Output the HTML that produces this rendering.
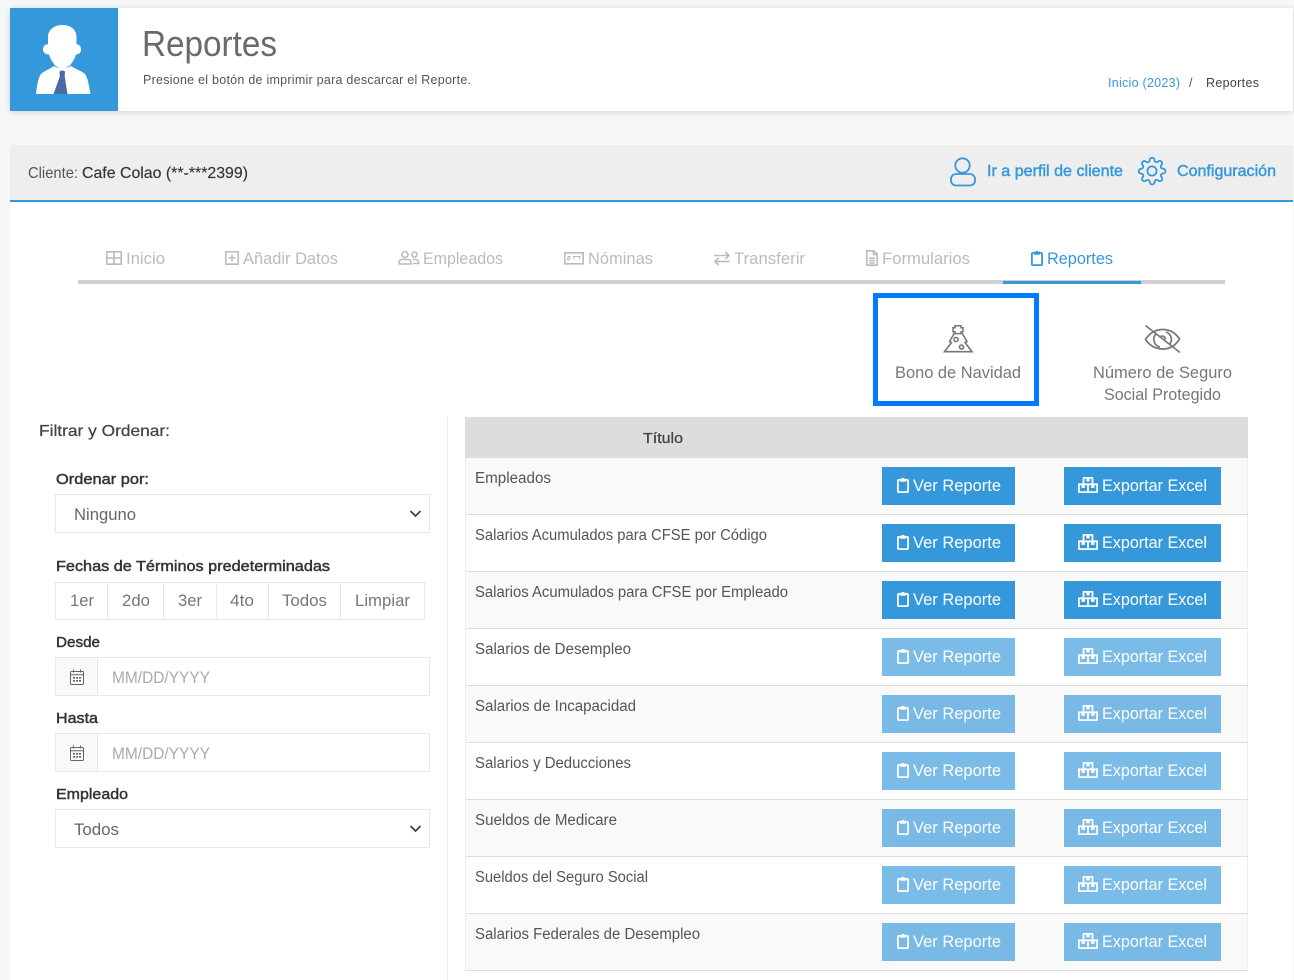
<!DOCTYPE html>
<html lang="es"><head><meta charset="utf-8"><title>Reportes</title>
<style>
html,body{margin:0;padding:0;background:#f6f7f9;width:1294px;height:980px;overflow:hidden}
svg{display:block}
text{font-family:"Liberation Sans",sans-serif;white-space:pre}
.tab{font-size:17px;fill:#bbb}
.lab{font-size:15px;fill:#333;stroke:#333;stroke-width:.45}
.ctl{font-size:17px;fill:#666}
.ph{font-size:17px;fill:#aaa}
.row{font-size:15.5px;fill:#555}
.btn{font-size:17px;fill:#fff}
.lnk{font-size:16px;fill:#3498db;stroke:#3498db;stroke-width:.45}
.opt{font-size:17px;fill:#777}
.ln{fill:none;stroke:#bbb;stroke-width:1.6}
</style></head><body>
<svg width="1294" height="980" viewBox="0 0 1294 980" xmlns="http://www.w3.org/2000/svg">
<defs>
<symbol id="clip" viewBox="0 0 12 16"><path fill="none" stroke="currentColor" stroke-width="1.8" d="M3.5 2.9H1.9a1 1 0 0 0-1 1v10.2a1 1 0 0 0 1 1h8.2a1 1 0 0 0 1-1V3.9a1 1 0 0 0-1-1H8.5"/><path fill="currentColor" d="M3.2 1.6h1.5a1.4 1.4 0 0 1 2.6 0h1.5v3.2H3.2z"/></symbol>
<symbol id="exp" viewBox="0 0 20 16"><g fill="none" stroke="currentColor" stroke-width="1.8"><path d="M5.5 7.3V1.2a.5.5 0 0 1 .5-.5h8a.5.5 0 0 1 .5.5v6.1"/><path d="M.9 7.3h18.2v7.4a.4.4 0 0 1-.4.4H1.3a.4.4 0 0 1-.4-.4zM10 7.3v7.8"/></g><path fill="currentColor" d="M8.3 1h3.4v3.4H8.3zM3.5 7.5h3.4v3.4H3.5zM13.1 7.5h3.4v3.4h-3.4z"/></symbol>
<symbol id="cal" viewBox="0 0 14 16"><g fill="none" stroke="#666" stroke-width="1"><rect x=".5" y="2.5" width="13" height="13" rx="1"/><path d="M.5 5.8h13M3.5 .5v3M10.5 .5v3"/></g><path fill="#666" d="M3 8h2v1.6H3zM6 8h2v1.6H6zM9 8h2v1.6H9zM3 11h2v1.6H3zM6 11h2v1.6H6zM9 11h2v1.6H9z"/></symbol>
</defs>

<!-- header card -->
<rect x="10" y="8" width="1283" height="103" rx="2" fill="#fff" style="filter:drop-shadow(0 1px 3px rgba(0,0,0,.16))"/>
<rect x="10" y="8" width="108" height="103" fill="#3498db"/>
<path fill="#fff" d="M36 94C37 86 38 78 41 74C44 71 50 69 54 66C58 69 66 69 71 66C75 69 82 71 85 74C88 78 89 86 90.5 94Z"/>
<path fill="#fff" stroke="#b8c4cc" stroke-width=".5" d="M54 64.8Q62 71 71 64.8"/>
<path fill="#fff" d="M62.5 25C53 25 47.5 31 48 38V44.5C45 44 43 46.5 43 49.5C43 52.5 45.5 54.5 49 54.5C51 61 56 68.5 62.5 68.5C69 68.5 74 61 76 54.5C79 54.5 81 52.5 81 49.5C81 46.5 79 44 76.5 44.5V38C77 31 72 25 62.5 25Z"/>
<path fill="#4a6aa5" d="M59.5 71.5Q62 69.5 65 71.5L64.7 76.5L67.5 94H53.5L59.8 76.5Z"/>
<text x="142" y="56" font-size="36" fill="#6a6a6a" textLength="135" lengthAdjust="spacingAndGlyphs">Reportes</text>
<text x="143" y="84" font-size="12.5" fill="#555" textLength="328" lengthAdjust="spacing">Presione el botón de imprimir para descarcar el Reporte.</text>
<text x="1108" y="87" font-size="12.5" fill="#3498db" textLength="72" lengthAdjust="spacing">Inicio (2023)</text>
<text x="1189" y="87" font-size="12.5" fill="#555">/</text>
<text x="1206" y="87" font-size="12.5" fill="#444" textLength="53" lengthAdjust="spacing">Reportes</text>

<!-- client bar -->
<rect x="10" y="202" width="1283" height="778" fill="#fff"/>
<path d="M10 200V147a2 2 0 0 1 2-2H1291a2 2 0 0 1 2 2V200Z" fill="#eee"/>
<rect x="10" y="200" width="1283" height="2" fill="#3498db"/>
<text x="28" y="178" font-size="16" fill="#555" textLength="50" lengthAdjust="spacingAndGlyphs">Cliente:</text>
<text x="82" y="178" font-size="16" fill="#333" stroke="#333" stroke-width=".15" textLength="166" lengthAdjust="spacingAndGlyphs">Cafe Colao (**-***2399)</text>
<g fill="none" stroke="#3498db" stroke-width="1.8">
<circle cx="962.5" cy="165.5" r="7.2"/>
<rect x="951" y="174" width="24" height="11.5" rx="5"/>
<path transform="translate(1137.5 156.5) scale(1.215)" stroke-width="1.45" d="M19.4 15a1.65 1.65 0 0 0 .33 1.82l.06.06a2 2 0 0 1 0 2.83 2 2 0 0 1-2.83 0l-.06-.06a1.65 1.65 0 0 0-1.82-.33 1.65 1.65 0 0 0-1 1.51V21a2 2 0 0 1-2 2 2 2 0 0 1-2-2v-.09A1.65 1.65 0 0 0 9 19.4a1.65 1.65 0 0 0-1.82.33l-.06.06a2 2 0 0 1-2.83 0 2 2 0 0 1 0-2.83l.06-.06a1.65 1.65 0 0 0 .33-1.82 1.65 1.65 0 0 0-1.51-1H3a2 2 0 0 1-2-2 2 2 0 0 1 2-2h.09A1.65 1.65 0 0 0 4.6 9a1.65 1.65 0 0 0-.33-1.82l-.06-.06a2 2 0 0 1 0-2.83 2 2 0 0 1 2.83 0l.06.06a1.65 1.65 0 0 0 1.82.33H9a1.65 1.65 0 0 0 1-1.51V3a2 2 0 0 1 2-2 2 2 0 0 1 2 2v.09a1.65 1.65 0 0 0 1 1.51 1.65 1.65 0 0 0 1.82-.33l.06-.06a2 2 0 0 1 2.83 0 2 2 0 0 1 0 2.83l-.06.06a1.65 1.65 0 0 0-.33 1.82V9a1.65 1.65 0 0 0 1.51 1H21a2 2 0 0 1 2 2 2 2 0 0 1-2 2h-.09a1.65 1.65 0 0 0-1.51 1z"/>
<circle cx="1152" cy="171" r="4.6"/>
</g>
<text class="lnk" x="987" y="176" textLength="136" lengthAdjust="spacingAndGlyphs">Ir a perfil de cliente</text>
<text class="lnk" x="1177" y="176" textLength="99" lengthAdjust="spacingAndGlyphs">Configuración</text>

<!-- tabs -->
<rect x="78" y="280" width="1147" height="4" fill="#d0d0d0"/>
<rect x="1003" y="281" width="138" height="3" fill="#3498db"/>
<path class="ln" d="M106.8 251.8h14.4v12.4h-14.4zM106.8 258h14.4M114 251.8v12.4"/>
<text class="tab" x="126" y="264" textLength="39" lengthAdjust="spacingAndGlyphs">Inicio</text>
<path class="ln" d="M225.8 251.8h12.4v12.4h-12.4zM232 254.5v7M228.5 258h7"/>
<text class="tab" x="243" y="264" textLength="95" lengthAdjust="spacingAndGlyphs">Añadir Datos</text>
<g class="ln"><circle cx="405" cy="254.5" r="3"/><path d="M399 264v-1.5a3 3 0 0 1 3-3h6a3 3 0 0 1 3 3V264ZM414.5 252a2.5 2.5 0 0 1 0 5 2.5 2.5 0 0 1 0-5ZM413 259.5h3a2.6 2.6 0 0 1 2.6 2.6v1.4H413"/></g>
<text class="tab" x="423" y="264" textLength="80" lengthAdjust="spacingAndGlyphs">Empleados</text>
<path class="ln" d="M564.8 252.8h18.4v11h-18.4z"/><path fill="none" stroke="#bbb" stroke-width="1" d="M567.5 256.5h2.5v1.5h-2.5v1.8h2.5M573 256.5h7.5M574 256.5v3M579.5 256.5v3"/>
<text class="tab" x="588" y="264" textLength="65" lengthAdjust="spacingAndGlyphs">Nóminas</text>
<path class="ln" d="M714 255.5h15M725.5 252l3.5 3.5-3.5 3.5M730 261.5H715M718.5 258l-3.5 3.5 3.5 3.5"/>
<text class="tab" x="734" y="264" textLength="71" lengthAdjust="spacingAndGlyphs">Transferir</text>
<path class="ln" d="M866.8 250.8h7l3.4 3.4v11h-10.4zM873.5 251v3.5h3.5M869 258h6M869 260.5h6M869 263h6"/>
<text class="tab" x="882" y="264" textLength="88" lengthAdjust="spacingAndGlyphs">Formularios</text>
<use href="#clip" x="1031" y="250" width="12" height="16" style="color:#3498db"/>
<text class="tab" style="fill:#3498db" x="1047" y="264" textLength="66" lengthAdjust="spacingAndGlyphs">Reportes</text>

<!-- option cards -->
<rect x="875.5" y="295.5" width="161" height="108" fill="none" stroke="#007bff" stroke-width="5"/>
<g fill="none" stroke="#777" stroke-width="1.6">
<path d="M954.5 333L949.5 341.5L951.5 342.5L944.5 351.7H972L965 342.5L967 341.5L962 333"/>
<path d="M955 325.8h6v2h2v4h-2v1.8h-6v-1.8h-2v-4h2z" stroke-width="1.5"/>
<circle cx="956" cy="339.5" r="2.1"/><circle cx="961.5" cy="347" r="2"/>
</g>
<text class="opt" x="895" y="378" textLength="126" lengthAdjust="spacingAndGlyphs">Bono de Navidad</text>
<g fill="none" stroke="#777" stroke-width="1.7">
<path d="M1145.5 325.5L1180 352.5"/>
<path d="M1145.5 339.5C1150 332.5 1156 329.5 1163 329.5C1170 329.5 1175.5 333 1179.5 339C1175.5 345.5 1170 349 1163 349C1156 349 1150 346 1145.5 339.5Z"/>
<path d="M1156.5 333.5a7.8 7.8 0 0 0 3.5 13.5M1166 332a7.8 7.8 0 0 1 3.5 12.5M1160.5 336.5a3.5 3.5 0 0 1 5 3"/>
</g>
<text class="opt" x="1093" y="378" textLength="139" lengthAdjust="spacingAndGlyphs">Número de Seguro</text>
<text class="opt" x="1104" y="400" textLength="117" lengthAdjust="spacingAndGlyphs">Social Protegido</text>

<!-- filter panel -->
<rect x="447" y="417" width="1" height="563" fill="#eee"/>
<text x="39" y="436" font-size="16" fill="#444" stroke="#444" stroke-width=".25" textLength="131" lengthAdjust="spacingAndGlyphs">Filtrar y Ordenar:</text>
<text class="lab" x="56" y="484" textLength="93" lengthAdjust="spacingAndGlyphs">Ordenar por:</text>
<rect x="55.5" y="494.5" width="374" height="38" fill="#fff" stroke="#e8e8e8"/>
<text class="ctl" x="74" y="520" textLength="62" lengthAdjust="spacingAndGlyphs">Ninguno</text>
<path d="M410.5 511l5 5 5-5" fill="none" stroke="#444" stroke-width="1.8"/>
<text class="lab" x="56" y="571" textLength="274" lengthAdjust="spacingAndGlyphs">Fechas de Términos predeterminadas</text>
<rect x="55.5" y="582.5" width="369" height="37" fill="#fff" stroke="#e8e8e8"/>
<path d="M107.5 582v38M163.5 582v38M216.5 582v38M268.5 582v38M340.5 582v38" stroke="#e8e8e8"/>
<g class="ctl" style="fill:#777">
<text x="70" y="606" textLength="24" lengthAdjust="spacingAndGlyphs">1er</text>
<text x="122" y="606" textLength="28" lengthAdjust="spacingAndGlyphs">2do</text>
<text x="178" y="606" textLength="24" lengthAdjust="spacingAndGlyphs">3er</text>
<text x="230" y="606" textLength="24" lengthAdjust="spacingAndGlyphs">4to</text>
<text x="282" y="606" textLength="45" lengthAdjust="spacingAndGlyphs">Todos</text>
<text x="355" y="606" textLength="55" lengthAdjust="spacingAndGlyphs">Limpiar</text>
</g>
<text class="lab" x="56" y="647" textLength="44" lengthAdjust="spacingAndGlyphs">Desde</text>
<rect x="55.5" y="657.5" width="374" height="38" fill="#fff" stroke="#e8e8e8"/>
<rect x="56" y="658" width="41" height="37" fill="#f8f9fa"/><path d="M97.5 657v39" stroke="#e8e8e8"/>
<use href="#cal" x="70" y="669" width="14" height="16"/>
<text class="ph" x="112" y="683" textLength="98" lengthAdjust="spacingAndGlyphs">MM/DD/YYYY</text>
<text class="lab" x="56" y="723" textLength="42" lengthAdjust="spacingAndGlyphs">Hasta</text>
<rect x="55.5" y="733.5" width="374" height="38" fill="#fff" stroke="#e8e8e8"/>
<rect x="56" y="734" width="41" height="37" fill="#f8f9fa"/><path d="M97.5 733v39" stroke="#e8e8e8"/>
<use href="#cal" x="70" y="745" width="14" height="16"/>
<text class="ph" x="112" y="759" textLength="98" lengthAdjust="spacingAndGlyphs">MM/DD/YYYY</text>
<text class="lab" x="56" y="799" textLength="72" lengthAdjust="spacingAndGlyphs">Empleado</text>
<rect x="55.5" y="809.5" width="374" height="38" fill="#fff" stroke="#e8e8e8"/>
<text class="ctl" x="74" y="835" textLength="45" lengthAdjust="spacingAndGlyphs">Todos</text>
<path d="M410.5 826l5 5 5-5" fill="none" stroke="#444" stroke-width="1.8"/>

<!-- table -->
<rect x="465" y="417" width="783" height="41" fill="#ddd"/>
<text x="643" y="443" font-size="15" fill="#444" stroke="#444" stroke-width=".3" textLength="40" lengthAdjust="spacingAndGlyphs">Título</text>
<g fill="#f9f9f9">
<rect x="466" y="458" width="782" height="56"/><rect x="466" y="572" width="782" height="56"/><rect x="466" y="686" width="782" height="56"/><rect x="466" y="800" width="782" height="56"/><rect x="466" y="914" width="782" height="56"/>
</g>
<rect x="465" y="458" width="1" height="513" fill="#eee"/><rect x="1247" y="458" width="1" height="513" fill="#eee"/>
<g fill="#ddd">
<rect x="466" y="514" width="782" height="1"/><rect x="466" y="571" width="782" height="1"/><rect x="466" y="628" width="782" height="1"/><rect x="466" y="685" width="782" height="1"/><rect x="466" y="742" width="782" height="1"/><rect x="466" y="799" width="782" height="1"/><rect x="466" y="856" width="782" height="1"/><rect x="466" y="913" width="782" height="1"/><rect x="466" y="970" width="782" height="1"/>
</g>
<g class="row">
<text class="row" x="475" y="483" textLength="76" lengthAdjust="spacingAndGlyphs">Empleados</text>
<text class="row" x="475" y="540" textLength="292" lengthAdjust="spacingAndGlyphs">Salarios Acumulados para CFSE por Código</text>
<text class="row" x="475" y="597" textLength="313" lengthAdjust="spacingAndGlyphs">Salarios Acumulados para CFSE por Empleado</text>
<text class="row" x="475" y="654" textLength="156" lengthAdjust="spacingAndGlyphs">Salarios de Desempleo</text>
<text class="row" x="475" y="711" textLength="161" lengthAdjust="spacingAndGlyphs">Salarios de Incapacidad</text>
<text class="row" x="475" y="768" textLength="156" lengthAdjust="spacingAndGlyphs">Salarios y Deducciones</text>
<text class="row" x="475" y="825" textLength="142" lengthAdjust="spacingAndGlyphs">Sueldos de Medicare</text>
<text class="row" x="475" y="882" textLength="173" lengthAdjust="spacingAndGlyphs">Sueldos del Seguro Social</text>
<text class="row" x="475" y="939" textLength="225" lengthAdjust="spacingAndGlyphs">Salarios Federales de Desempleo</text>
</g>

<!-- buttons -->
<g style="color:#fff">
<g><rect x="882" y="467" width="133" height="38" fill="#3498db"/><use href="#clip" x="897" y="477" width="12" height="16"/><text class="btn" x="913" y="491" textLength="88" lengthAdjust="spacingAndGlyphs">Ver Reporte</text><rect x="1064" y="467" width="157" height="38" fill="#3498db"/><use href="#exp" x="1078" y="477" width="20" height="16"/><text class="btn" x="1102" y="491" textLength="105" lengthAdjust="spacingAndGlyphs">Exportar Excel</text></g>
<g><rect x="882" y="524" width="133" height="38" fill="#3498db"/><use href="#clip" x="897" y="534" width="12" height="16"/><text class="btn" x="913" y="548" textLength="88" lengthAdjust="spacingAndGlyphs">Ver Reporte</text><rect x="1064" y="524" width="157" height="38" fill="#3498db"/><use href="#exp" x="1078" y="534" width="20" height="16"/><text class="btn" x="1102" y="548" textLength="105" lengthAdjust="spacingAndGlyphs">Exportar Excel</text></g>
<g><rect x="882" y="581" width="133" height="38" fill="#3498db"/><use href="#clip" x="897" y="591" width="12" height="16"/><text class="btn" x="913" y="605" textLength="88" lengthAdjust="spacingAndGlyphs">Ver Reporte</text><rect x="1064" y="581" width="157" height="38" fill="#3498db"/><use href="#exp" x="1078" y="591" width="20" height="16"/><text class="btn" x="1102" y="605" textLength="105" lengthAdjust="spacingAndGlyphs">Exportar Excel</text></g>
<g opacity=".65"><rect x="882" y="638" width="133" height="38" fill="#3498db"/><use href="#clip" x="897" y="648" width="12" height="16"/><text class="btn" x="913" y="662" textLength="88" lengthAdjust="spacingAndGlyphs">Ver Reporte</text><rect x="1064" y="638" width="157" height="38" fill="#3498db"/><use href="#exp" x="1078" y="648" width="20" height="16"/><text class="btn" x="1102" y="662" textLength="105" lengthAdjust="spacingAndGlyphs">Exportar Excel</text></g>
<g opacity=".65"><rect x="882" y="695" width="133" height="38" fill="#3498db"/><use href="#clip" x="897" y="705" width="12" height="16"/><text class="btn" x="913" y="719" textLength="88" lengthAdjust="spacingAndGlyphs">Ver Reporte</text><rect x="1064" y="695" width="157" height="38" fill="#3498db"/><use href="#exp" x="1078" y="705" width="20" height="16"/><text class="btn" x="1102" y="719" textLength="105" lengthAdjust="spacingAndGlyphs">Exportar Excel</text></g>
<g opacity=".65"><rect x="882" y="752" width="133" height="38" fill="#3498db"/><use href="#clip" x="897" y="762" width="12" height="16"/><text class="btn" x="913" y="776" textLength="88" lengthAdjust="spacingAndGlyphs">Ver Reporte</text><rect x="1064" y="752" width="157" height="38" fill="#3498db"/><use href="#exp" x="1078" y="762" width="20" height="16"/><text class="btn" x="1102" y="776" textLength="105" lengthAdjust="spacingAndGlyphs">Exportar Excel</text></g>
<g opacity=".65"><rect x="882" y="809" width="133" height="38" fill="#3498db"/><use href="#clip" x="897" y="819" width="12" height="16"/><text class="btn" x="913" y="833" textLength="88" lengthAdjust="spacingAndGlyphs">Ver Reporte</text><rect x="1064" y="809" width="157" height="38" fill="#3498db"/><use href="#exp" x="1078" y="819" width="20" height="16"/><text class="btn" x="1102" y="833" textLength="105" lengthAdjust="spacingAndGlyphs">Exportar Excel</text></g>
<g opacity=".65"><rect x="882" y="866" width="133" height="38" fill="#3498db"/><use href="#clip" x="897" y="876" width="12" height="16"/><text class="btn" x="913" y="890" textLength="88" lengthAdjust="spacingAndGlyphs">Ver Reporte</text><rect x="1064" y="866" width="157" height="38" fill="#3498db"/><use href="#exp" x="1078" y="876" width="20" height="16"/><text class="btn" x="1102" y="890" textLength="105" lengthAdjust="spacingAndGlyphs">Exportar Excel</text></g>
<g opacity=".65"><rect x="882" y="923" width="133" height="38" fill="#3498db"/><use href="#clip" x="897" y="933" width="12" height="16"/><text class="btn" x="913" y="947" textLength="88" lengthAdjust="spacingAndGlyphs">Ver Reporte</text><rect x="1064" y="923" width="157" height="38" fill="#3498db"/><use href="#exp" x="1078" y="933" width="20" height="16"/><text class="btn" x="1102" y="947" textLength="105" lengthAdjust="spacingAndGlyphs">Exportar Excel</text></g>
</g>
</svg>
</body></html>
